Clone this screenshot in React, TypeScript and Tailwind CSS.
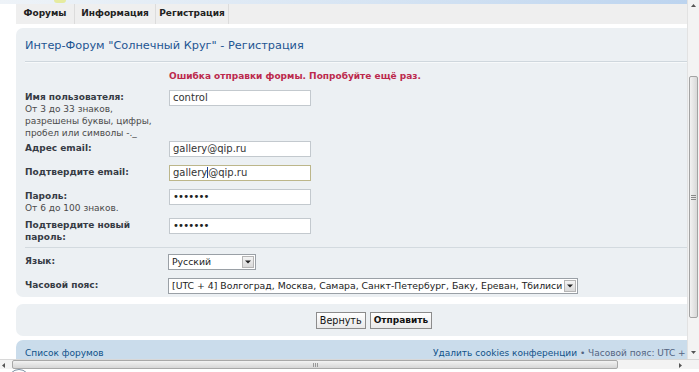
import React from "react";

const Label = ({ children }: { children: React.ReactNode }) => (
  <div className="w-[144px] shrink-0 pt-[1px] text-[9px] leading-[12px] font-bold text-[#363b44]">{children}</div>
);

const Input = ({ children, focused }: { children: React.ReactNode; focused?: boolean }) => (
  <div
    className={
      "w-[142px] h-[16px] bg-white pl-[3px] text-[10px] leading-[14px] text-[#333] whitespace-nowrap border " +
      (focused ? "border-[#bcb68a]" : "border-[#c3c9ce]")
    }
  >
    {children}
  </div>
);

const Select = ({ w, children }: { w: string; children: React.ReactNode }) => (
  <div className={"h-[16px] bg-white border border-[#9aa0a6] flex items-center justify-between overflow-hidden " + w}>
    <span className="pl-[3px] text-[9.3px] leading-[14px] text-[#222] whitespace-nowrap">{children}</span>
    <span className="w-[12px] h-[12px] shrink-0 mr-[1px] bg-gradient-to-b from-[#f4f4f4] to-[#d9d9d9] border border-[#b5b5b5] flex items-center justify-center">
      <svg width="6" height="4" viewBox="0 0 6 4"><path d="M0 0.5h6L3 3.5z" fill="#222" /></svg>
    </span>
  </div>
);

const Dots = () => <span className="tracking-[-0.8px] text-[#222]">•••••••</span>;

export default function App() {
  return (
    <div className="relative w-[699px] h-[372px] overflow-hidden bg-white font-['DejaVu_Sans',sans-serif]">
      <div className="flex h-[359px]">
        <div className="w-[687px] shrink-0 overflow-hidden">
          <div className="w-[760px]">
            {/* top strip */}
            <div className="relative h-[4px] bg-gradient-to-r from-[#eef3f8] via-[#d6e4f3] to-[#b6d0ee]">
              <div className="absolute left-[54px] top-0 w-[12px] h-[3px] rounded-b-full bg-[#e6eba0]" />
            </div>
            {/* tabs */}
            <div className="ml-[16px] h-[21px] bg-[#efefef] border-b border-white flex text-[9px] font-bold text-[#222]">
              <div className="w-[59px] flex items-center justify-center border-r border-[#dcdcdc]">Форумы</div>
              <div className="w-[81px] flex items-center justify-center border-r border-[#dcdcdc]">Информация</div>
              <div className="w-[73px] flex items-center justify-center border-r border-[#dcdcdc]">Регистрация</div>
            </div>
            {/* main panel */}
            <div className="ml-[16px] mt-[3px] w-[716px] h-[269px] rounded-[7px] bg-[#ecf0f3] pl-[9px] pt-[10px]">
              <div className="text-[11.3px] leading-[16px] text-[#1d5592]">Интер-Форум "Солнечный Круг" - Регистрация</div>
              <div className="mt-[7px] h-px bg-[#cfd7dd]" />
              <div className="h-px bg-[#f7f9fa]" />
              <div className="mt-[7px] pl-[144px] text-[9px] leading-[12px] font-bold text-[#bc2a4d]">
                Ошибка отправки формы. Попробуйте ещё раз.
              </div>
              <div className="mt-[8px] flex">
                <div className="w-[144px] shrink-0 pt-[1px] text-[9px] leading-[12px]">
                  <div className="font-bold text-[#363b44]">Имя пользователя:</div>
                  <div className="text-[#4a4a4a] whitespace-nowrap">
                    От 3 до 33 знаков,<br />разрешены буквы, цифры,<br />пробел или символы -._
                  </div>
                </div>
                <Input>control</Input>
              </div>
              <div className="mt-[2px] flex">
                <Label>Адрес email:</Label>
                <Input>gallery@qip.ru</Input>
              </div>
              <div className="mt-[8px] flex">
                <Label>Подтвердите email:</Label>
                <Input focused>
                  gallery<span className="inline-block w-px h-[11px] bg-[#1b3f91] align-[-2px]" />@qip.ru
                </Input>
              </div>
              <div className="mt-[8px] flex">
                <div className="w-[144px] shrink-0 pt-[1px] text-[9px] leading-[12px]">
                  <div className="font-bold text-[#363b44]">Пароль:</div>
                  <div className="text-[#4a4a4a]">От 6 до 100 знаков.</div>
                </div>
                <Input>
                  <Dots />
                </Input>
              </div>
              <div className="mt-[4px] flex">
                <Label>
                  Подтвердите новый
                  <br />
                  пароль:
                </Label>
                <Input>
                  <Dots />
                </Input>
              </div>
              <div className="mt-[4px] h-px bg-[#d3dadf]" />
              <div className="mt-[6px] flex">
                <Label>Язык:</Label>
                <div className="-ml-[1px]">
                  <Select w="w-[88px]">Русский</Select>
                </div>
              </div>
              <div className="mt-[8px] flex">
                <Label>Часовой пояс:</Label>
                <div className="-ml-[1px]">
                  <Select w="w-[410px]">[UTC + 4] Волгоград, Москва, Самара, Санкт-Петербург, Баку, Ереван, Тбилиси</Select>
                </div>
              </div>
            </div>
            {/* buttons panel */}
            <div className="ml-[16px] mt-[7px] w-[716px] h-[32px] rounded-[7px] bg-[#ecf0f3] flex items-center justify-center gap-[4px]">
              <div className="h-[17px] px-[3px] border border-[#8c8c8c] bg-gradient-to-b from-white to-[#e9e9e9] text-[9.6px] leading-[15px] text-[#111]">Вернуть</div>
              <div className="h-[17px] px-[3px] border border-[#8c8c8c] bg-gradient-to-b from-white to-[#e9e9e9] text-[9px] leading-[15px] font-bold text-[#111]">Отправить</div>
            </div>
            {/* footer */}
            <div className="ml-[16px] mt-[4px] w-[716px] h-[40px] rounded-t-[7px] bg-[#cadceb] pl-[9px] pt-[7px] flex text-[9px] leading-[12px] whitespace-nowrap">
              <div className="w-[408px] shrink-0 text-[#105289]">Список форумов</div>
              <div>
                <span className="text-[#105289]">Удалить cookies конференции</span>
                <span className="text-[#536482]"> • Часовой пояс: UTC +</span>
              </div>
            </div>
          </div>
        </div>
        {/* vertical scrollbar */}
        <div className="relative w-[12px] h-[359px] bg-[#f3f3f3] border-l border-[#e2e2e2]">
          <svg className="absolute left-[3px] top-[4px]" width="5" height="3" viewBox="0 0 5 3"><path d="M0 3h5L2.5 0z" fill="#555" /></svg>
          <div className="absolute left-[1px] top-[76px] w-[9px] h-[242px] rounded-[2px] border border-[#a3a3a3] bg-gradient-to-r from-[#f2f2f2] to-[#d8d8d8] flex flex-col items-center justify-center gap-[1px]">
            <div className="w-[5px] h-px bg-[#888]" />
            <div className="w-[5px] h-px bg-[#888]" />
            <div className="w-[5px] h-px bg-[#888]" />
          </div>
          <svg className="absolute left-[3px] top-[351px]" width="5" height="3" viewBox="0 0 5 3"><path d="M0 0h5L2.5 3z" fill="#555" /></svg>
        </div>
      </div>
      {/* horizontal scrollbar */}
      <div className="relative h-[10px] bg-[#f3f3f3] border-t border-[#d8d8d8]">
        <svg className="absolute left-[2px] top-[3px]" width="3" height="5" viewBox="0 0 3 5"><path d="M3 0v5L0 2.5z" fill="#555" /></svg>
        <div className="absolute left-[12px] top-0 w-[606px] h-[9px] rounded-[2px] border border-[#a8a8a8] bg-gradient-to-b from-[#f2f2f2] to-[#d6d6d6] flex items-center justify-center gap-[1px]">
          <div className="w-px h-[4px] bg-[#999]" />
          <div className="w-px h-[4px] bg-[#999]" />
          <div className="w-px h-[4px] bg-[#999]" />
        </div>
        <svg className="absolute left-[679px] top-[3px]" width="3" height="5" viewBox="0 0 3 5"><path d="M0 0v5L3 2.5z" fill="#555" /></svg>
      </div>
      <div className="relative h-[3px] bg-white">
        <div className="absolute left-[8px] top-0 w-[22px] h-[22px] rounded-full border border-[#7b8fa3]" />
      </div>
    </div>
  );
}
